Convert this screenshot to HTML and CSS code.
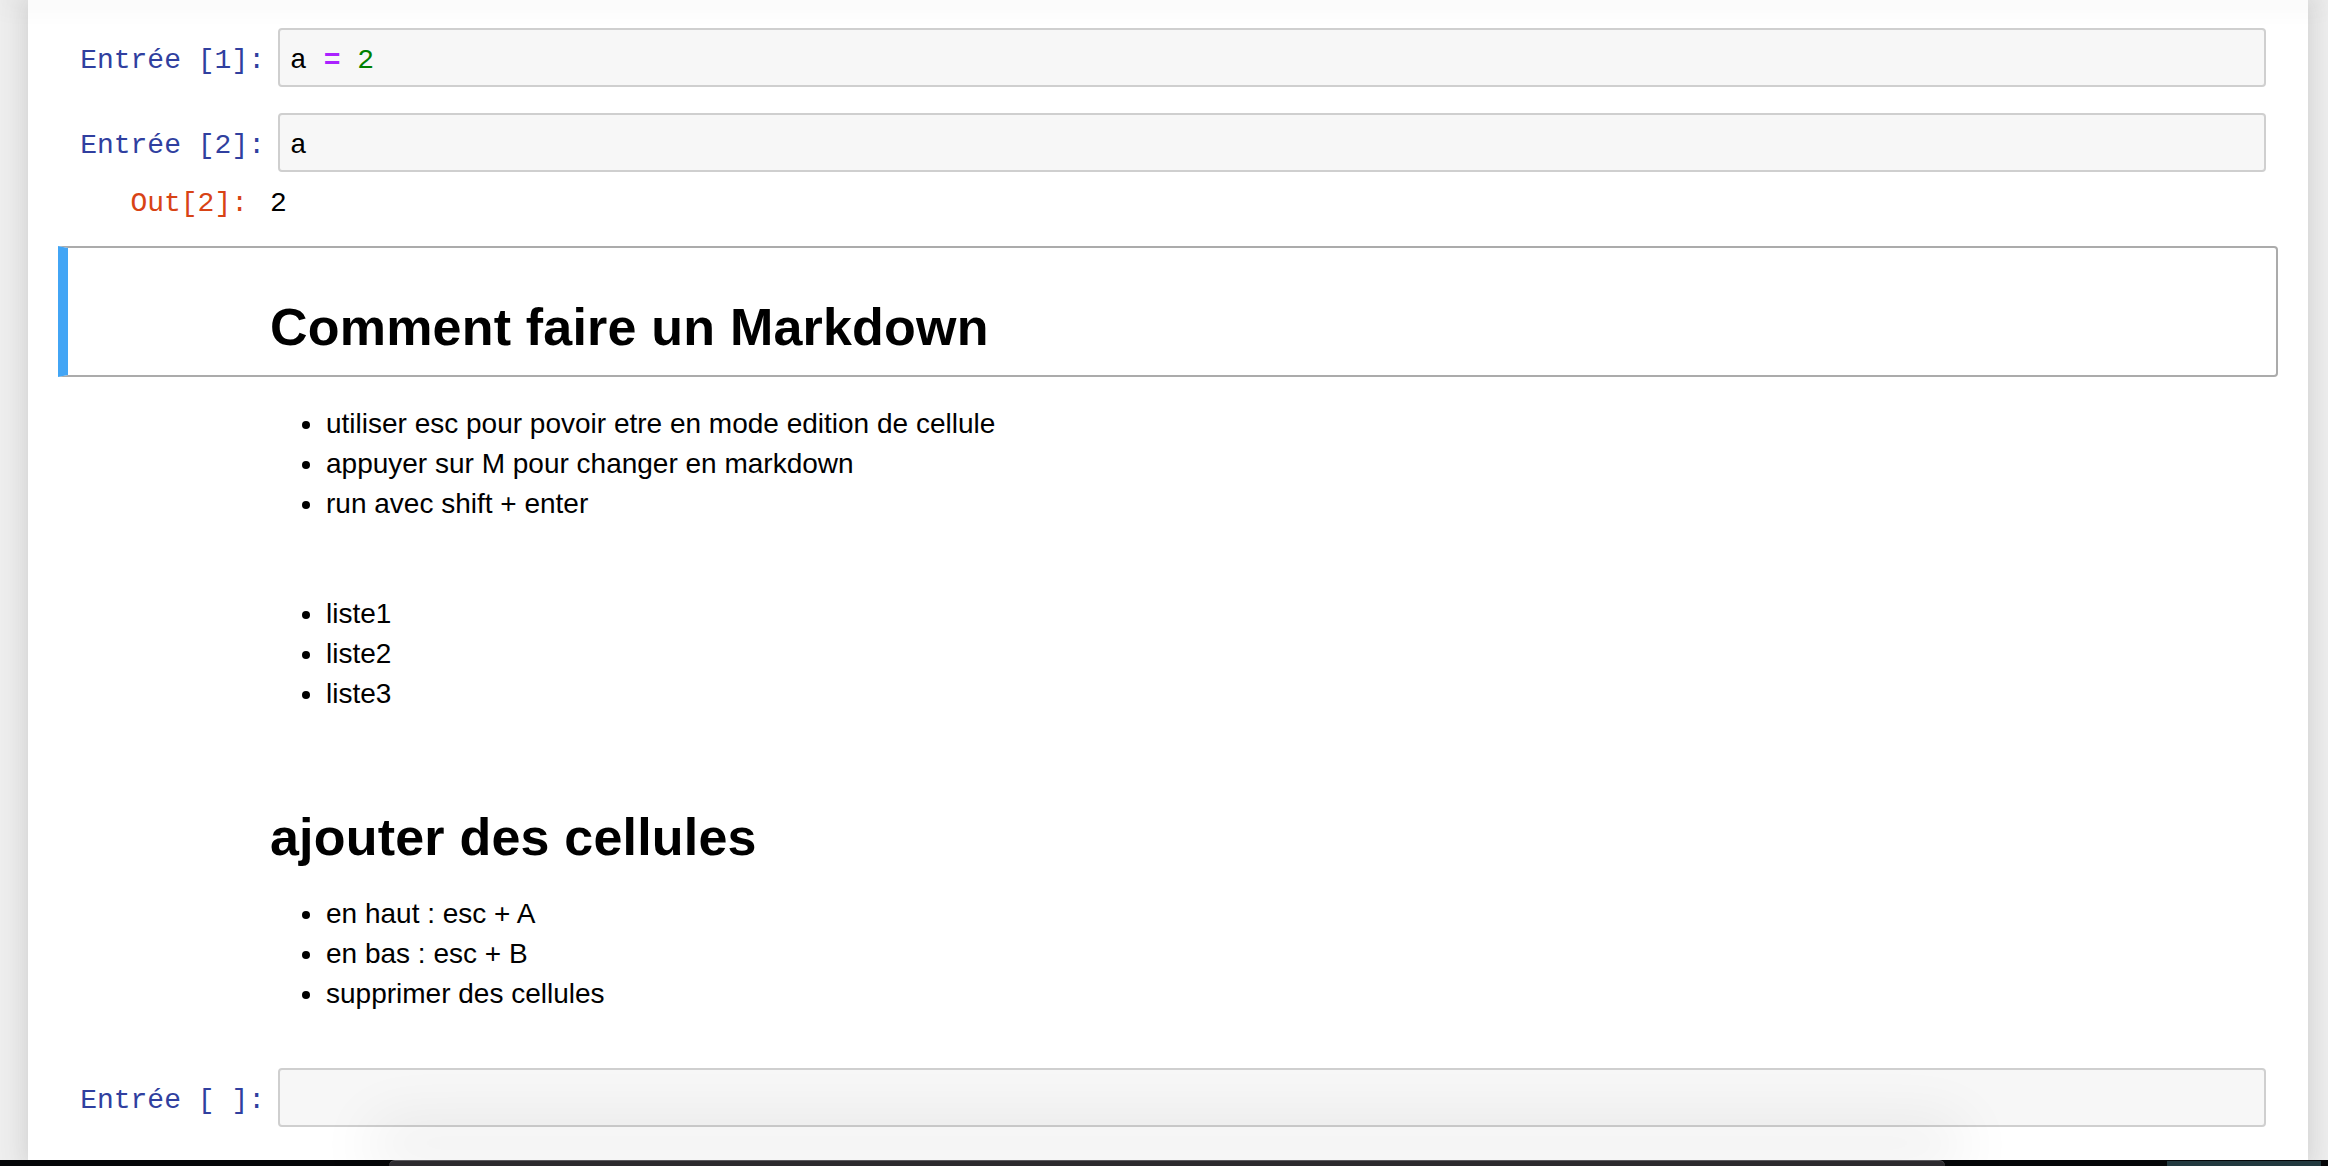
FILE: index.html
```html
<!DOCTYPE html>
<html lang="fr">
<head>
<meta charset="utf-8">
<title>Notebook</title>
<link rel="stylesheet" href="styles.css">
</head>
<body>
<div class="header"></div>
<div class="notebook">
  <div class="cell">
    <div class="code-row">
      <div class="prompt">Entrée [1]:</div>
      <div class="input-area"><span class="var">a</span> <span class="op">=</span> <span class="num">2</span></div>
    </div>
  </div>
  <div class="cell">
    <div class="code-row">
      <div class="prompt">Entrée [2]:</div>
      <div class="input-area"><span class="var">a</span></div>
    </div>
    <div class="out-row">
      <div class="out-prompt">Out[2]:</div>
      <div class="out-content">2</div>
    </div>
  </div>
  <div class="cell selected">
    <div class="md-row">
      <div class="md-prompt"></div>
      <div class="md-body">
        <h1 class="md-h1">Comment faire un Markdown</h1>
      </div>
    </div>
  </div>
  <div class="cell">
    <div class="md-row">
      <div class="md-prompt"></div>
      <div class="md-body">
        <ul class="md-list first">
          <li>utiliser esc pour povoir etre en mode edition de cellule</li>
          <li>appuyer sur M pour changer en markdown</li>
          <li>run avec shift + enter</li>
        </ul>
        <ul class="md-list second">
          <li>liste1</li>
          <li>liste2</li>
          <li>liste3</li>
        </ul>
        <h1 class="md-h1 sub">ajouter des cellules</h1>
        <ul class="md-list third">
          <li>en haut : esc + A</li>
          <li>en bas : esc + B</li>
          <li>supprimer des cellules</li>
        </ul>
      </div>
    </div>
  </div>
  <div class="cell">
    <div class="code-row">
      <div class="prompt">Entrée [ ]:</div>
      <div class="input-area empty"></div>
    </div>
  </div>
</div>
<div class="bottom-bar">
  <div class="dock"></div>
  <div class="teal"></div>
</div>
</body>
</html>
```
FILE: styles.css
```css
html, body {
  margin: 0;
  padding: 0;
  height: 100%;
}
body {
  background: #eeeeee;
  overflow: hidden;
  font-family: "Liberation Sans", Arial, sans-serif;
  color: #000;
}
.header {
  height: 0;
  position: relative;
  z-index: 2;
  box-shadow: 0 0 24px 2px rgba(87, 87, 87, 0.2);
}
.notebook {
  width: 2280px;
  margin-left: 28px;
  min-height: 1166px;
  box-sizing: border-box;
  background: #ffffff;
  box-shadow: 0 0 24px 2px rgba(87, 87, 87, 0.2);
  padding: 15px 30px 0;
}
.cell {
  border: 2px solid transparent;
  border-radius: 4px;
  padding: 11px 10px;
}
.cell.selected {
  border-color: #ababab;
  border-left: 10px solid #42a5f5;
  border-radius: 0 4px 4px 0;
  padding-left: 2px;
}
.code-row {
  display: flex;
  align-items: baseline;
}
.prompt {
  width: 208px;
  flex: none;
  box-sizing: border-box;
  padding-right: 13px;
  text-align: right;
  font: 28px/34px "Liberation Mono", "Courier New", monospace;
  color: #303f9f;
  white-space: pre;
}
.input-area {
  flex: 1;
  min-height: 34px;
  background: #f7f7f7;
  border: 2px solid #cfcfcf;
  border-radius: 4px;
  padding: 14px 10px 7px;
  font: 28px/34px "Liberation Mono", "Courier New", monospace;
  color: #000;
  white-space: pre;
}
.input-area.empty::before {
  content: "\200b";
}
.op {
  color: #aa22ff;
  font-weight: bold;
}
.num {
  color: #008000;
}
.out-row {
  display: flex;
  align-items: baseline;
  margin: 15px 0 12px;
  font: 28px/34px "Liberation Mono", "Courier New", monospace;
}
.out-prompt {
  width: 178px;
  flex: none;
  text-align: right;
  color: #d84315;
}
.out-content {
  padding-left: 22px;
  color: #000;
}
.md-row {
  display: flex;
}
.md-prompt {
  width: 200px;
  flex: none;
}
.md-body {
  flex: 1;
}
.md-h1 {
  font: bold 52px/62px "Liberation Sans", Arial, sans-serif;
  margin: 37px 0 6px;
  letter-spacing: 0.2px;
}
.md-h1.sub {
  margin: 92px 0 0;
}
.md-list {
  margin: 0;
  padding-left: 55px;
  font: 28px/40px "Liberation Sans", Arial, sans-serif;
}
.md-list li {
  padding-left: 1px;
}
.md-list.first {
  margin-top: 14px;
}
.md-list.second {
  margin-top: 70px;
}
.md-list.third {
  margin-top: 26px;
  margin-bottom: 28px;
}
.bottom-bar {
  position: fixed;
  left: 0;
  right: 0;
  bottom: 0;
  height: 6px;
  background: #050608;
  z-index: 5;
}
.dock {
  position: absolute;
  left: 389px;
  bottom: 0;
  width: 1556px;
  height: 6px;
  box-sizing: border-box;
  background: #2c2a2e;
  border-top: 1px solid #5c5a5e;
  border-radius: 14px 14px 0 0;
  box-shadow: 0 -20px 60px 20px rgba(0, 0, 0, 0.07);
}
.teal {
  position: absolute;
  left: 2167px;
  bottom: 0;
  width: 154px;
  height: 5px;
  background: #22393f;
}
```
